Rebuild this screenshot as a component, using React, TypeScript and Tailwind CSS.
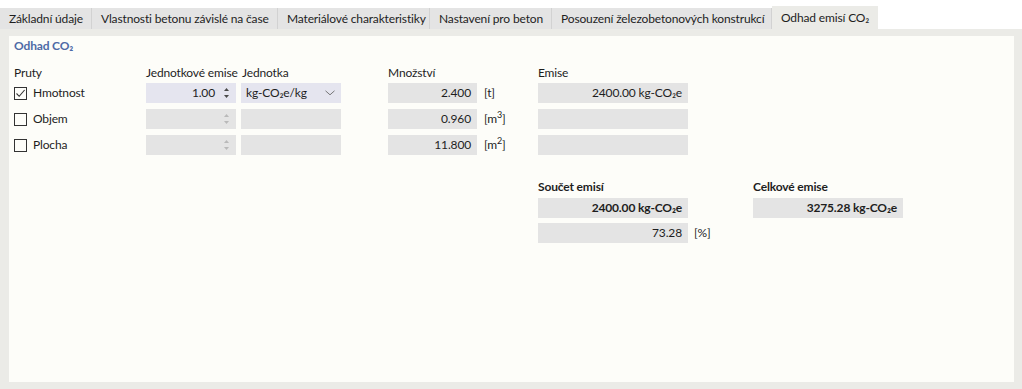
import React from 'react';

const tabs = [
  { label: 'Základní údaje', w: 'w-[92px]' },
  { label: 'Vlastnosti betonu závislé na čase', w: 'w-[186px]' },
  { label: 'Materiálové charakteristiky', w: 'w-[152px]' },
  { label: 'Nastavení pro beton', w: 'w-[122px]' },
  { label: 'Posouzení železobetonových konstrukcí', w: 'w-[220px]' },
];

function Spinner({ disabled }: { disabled?: boolean }) {
  const c = disabled ? '#b9b9b9' : '#4a4a4a';
  return (
    <svg width="7" height="14" viewBox="0 0 7 14" className="mr-[6px]">
      <path d="M3.5 2 L6 5 L1 5 Z" fill={c} />
      <path d="M3.5 12 L6 9 L1 9 Z" fill={c} />
    </svg>
  );
}

function Chevron() {
  return (
    <svg width="10" height="6" viewBox="0 0 10 6" className="mr-[1px]">
      <path d="M0.5 0.8 L5 4.8 L9.5 0.8" fill="none" stroke="#6a6a6a" strokeWidth="0.9" />
    </svg>
  );
}

function CheckBox({ checked }: { checked?: boolean }) {
  return (
    <div className="w-[13px] h-[13px] border border-[#333333] bg-[#fdfdf9] flex items-center justify-center">
      {checked && (
        <svg width="11" height="11" viewBox="0 0 11 11">
          <path d="M1.5 5.5 L4.2 8.3 L9.6 2" fill="none" stroke="#333333" strokeWidth="1.1" />
        </svg>
      )}
    </div>
  );
}

const rows = [
  { label: 'Hmotnost', checked: true, qty: '2.400', unit: <>[t]</>, emise: '2400.00 kg-CO₂e' },
  { label: 'Objem', checked: false, qty: '0.960', unit: <>[m<sup className="text-[9px] -top-[5px]">3</sup>]</>, emise: '' },
  { label: 'Plocha', checked: false, qty: '11.800', unit: <>[m<sup className="text-[9px] -top-[5px]">2</sup>]</>, emise: '' },
];

export default function App() {
  return (
    <div className="w-[1022px] h-[389px] bg-white font-['Lato',sans-serif] text-[12px] tracking-[-0.15px] text-[#1e1e1e] leading-[16px] whitespace-nowrap flex flex-col">
      {/* Tab strip */}
      <div className="pt-[6px] flex items-end">
        <div className="flex items-end h-[23px]">
          {tabs.map((t) => (
            <div
              key={t.label}
              className={`${t.w} h-[21px] bg-[#e4e4e4] border-r border-[#d2d2d2] pl-[9px] flex items-center overflow-hidden`}
            >
              {t.label}
            </div>
          ))}
          <div className="w-[106px] h-[23px] bg-[#ebebe7] pl-[9px] flex items-center">
            Odhad emisí CO₂
          </div>
        </div>
      </div>

      {/* Panel */}
      <div className="flex-1 bg-[#ebebe7] pt-[7px] pl-[9px] pr-[8px] pb-[7px] flex">
        <div className="flex-1 bg-[#fdfdf9] pl-[5px] pt-[1px]">
          <div className="font-bold text-[#4e6aa6] h-[18px] flex items-center">Odhad CO₂</div>

          {/* Column headers */}
          <div className="flex mt-[9px] h-[18px] items-center">
            <div className="w-[132px]">Pruty</div>
            <div className="w-[96px]">Jednotkové emise</div>
            <div className="w-[146px]">Jednotka</div>
            <div className="w-[150px]">Množství</div>
            <div className="w-[150px]">Emise</div>
          </div>

          <div className="flex flex-col gap-[6px] mt-[1px]">
            {rows.map((r, i) => (
              <div key={r.label} className="flex h-[20px] items-center">
                <div className="w-[132px] flex items-center gap-[6px]">
                  <CheckBox checked={r.checked} />
                  <span>{r.label}</span>
                </div>
                <div
                  className={`w-[90px] h-[20px] flex items-center justify-end ${i === 0 ? 'bg-[#e5e5ef]' : 'bg-[#e4e4e4]'}`}
                >
                  {i === 0 && <span className="mr-[8px]">1.00</span>}
                  <Spinner disabled={i !== 0} />
                </div>
                <div
                  className={`ml-[5px] w-[100px] h-[20px] flex items-center justify-between pl-[5px] pr-[5px] ${i === 0 ? 'bg-[#e5e5ef]' : 'bg-[#e4e4e4]'}`}
                >
                  {i === 0 && (
                    <>
                      <span>kg-CO₂e/kg</span>
                      <Chevron />
                    </>
                  )}
                </div>
                <div className="ml-[47px] w-[89px] h-[20px] bg-[#e4e4e4] flex items-center justify-end pr-[6px]">
                  {r.qty}
                </div>
                <div className="w-[61px] pl-[7px]">{r.unit}</div>
                <div className="w-[150px] h-[20px] bg-[#e4e4e4] flex items-center justify-end pr-[6px]">
                  {r.emise}
                </div>
              </div>
            ))}
          </div>

          {/* Totals */}
          <div className="flex mt-[23px] ml-[524px]">
            <div className="w-[215px] flex flex-col">
              <div className="font-bold h-[18px] flex items-center">Součet emisí</div>
              <div className="mt-[2px] w-[150px] h-[20px] bg-[#e4e4e4] flex items-center justify-end pr-[6px] font-bold">
                2400.00 kg-CO₂e
              </div>
              <div className="mt-[5px] flex items-center">
                <div className="w-[150px] h-[20px] bg-[#e4e4e4] flex items-center justify-end pr-[6px]">73.28</div>
                <span className="ml-[6px]">[%]</span>
              </div>
            </div>
            <div className="w-[150px] flex flex-col">
              <div className="font-bold h-[18px] flex items-center">Celkové emise</div>
              <div className="mt-[2px] w-[150px] h-[20px] bg-[#e4e4e4] flex items-center justify-end pr-[6px] font-bold">
                3275.28 kg-CO₂e
              </div>
            </div>
          </div>
        </div>
      </div>
    </div>
  );
}
